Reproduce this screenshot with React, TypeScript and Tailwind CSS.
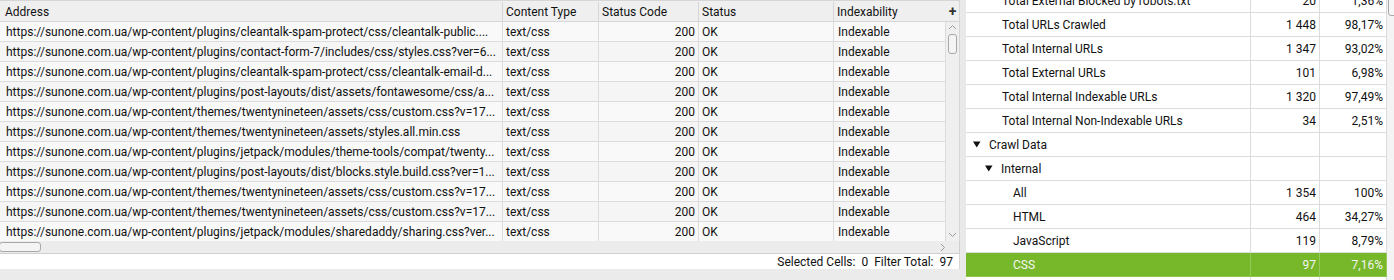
import React from "react";

const addresses = [
  "https://sunone.com.ua/wp-content/plugins/cleantalk-spam-protect/css/cleantalk-public....",
  "https://sunone.com.ua/wp-content/plugins/contact-form-7/includes/css/styles.css?ver=6...",
  "https://sunone.com.ua/wp-content/plugins/cleantalk-spam-protect/css/cleantalk-email-d...",
  "https://sunone.com.ua/wp-content/plugins/post-layouts/dist/assets/fontawesome/css/a...",
  "https://sunone.com.ua/wp-content/themes/twentynineteen/assets/css/custom.css?v=17...",
  "https://sunone.com.ua/wp-content/themes/twentynineteen/assets/styles.all.min.css",
  "https://sunone.com.ua/wp-content/plugins/jetpack/modules/theme-tools/compat/twenty...",
  "https://sunone.com.ua/wp-content/plugins/post-layouts/dist/blocks.style.build.css?ver=1...",
  "https://sunone.com.ua/wp-content/themes/twentynineteen/assets/css/custom.css?v=17...",
  "https://sunone.com.ua/wp-content/themes/twentynineteen/assets/css/custom.css?v=17...",
  "https://sunone.com.ua/wp-content/plugins/jetpack/modules/sharedaddy/sharing.css?ver...",
];

type RRow = {
  label: string;
  num?: string;
  pct?: string;
  indent: number;
  tri?: boolean;
  selected?: boolean;
};

const rightRows: RRow[] = [
  { label: "Total External Blocked by robots.txt", num: "20", pct: "1,36%", indent: 36 },
  { label: "Total URLs Crawled", num: "1 448", pct: "98,17%", indent: 36 },
  { label: "Total Internal URLs", num: "1 347", pct: "93,02%", indent: 36 },
  { label: "Total External URLs", num: "101", pct: "6,98%", indent: 36 },
  { label: "Total Internal Indexable URLs", num: "1 320", pct: "97,49%", indent: 36 },
  { label: "Total Internal Non-Indexable URLs", num: "34", pct: "2,51%", indent: 36 },
  { label: "Crawl Data", indent: 23, tri: true },
  { label: "Internal", indent: 35, tri: true },
  { label: "All", num: "1 354", pct: "100%", indent: 47 },
  { label: "HTML", num: "464", pct: "34,27%", indent: 47 },
  { label: "JavaScript", num: "119", pct: "8,79%", indent: 47 },
  { label: "CSS", num: "97", pct: "7,16%", indent: 47, selected: true },
  { label: "", indent: 47 },
];

function Tri() {
  return (
    <svg width="8" height="7" viewBox="0 0 8 7" className="shrink-0">
      <polygon points="0,0.5 7.5,0.5 3.75,6.5" fill="#111" />
    </svg>
  );
}

export default function App() {
  return (
    <div
      className="w-[1394px] h-[280px] flex bg-[#ebebeb] overflow-hidden text-[12px] text-[#111]"
      style={{ fontFamily: "Roboto, 'Liberation Sans', sans-serif" }}
    >
      {/* Left panel */}
      <div className="w-[960px] flex flex-col shrink-0">
        <div className="h-[241px] flex overflow-hidden">
          {/* table */}
          <div className="w-[946px] flex flex-col">
            <div className="h-[22px] flex bg-[#efefef] border-t border-b border-[#d6d6d6] shrink-0 pt-[1px]">
              <div className="w-[503px] border-r border-[#d6d6d6] pl-[5px] flex items-center">Address</div>
              <div className="w-[96px] border-r border-[#d6d6d6] pl-[3px] flex items-center">Content Type</div>
              <div className="w-[100px] border-r border-[#d6d6d6] pl-[3px] flex items-center">Status Code</div>
              <div className="w-[135px] border-r border-[#d6d6d6] pl-[3px] flex items-center">Status</div>
              <div className="w-[112px] pl-[3px] flex items-center">Indexability</div>
            </div>
            {addresses.map((a, i) => (
              <div
                key={i}
                className={`h-[20px] flex shrink-0 border-b border-[#dcdcdc] ${i % 2 === 0 ? "bg-[#f9f9f9]" : "bg-[#f5f5f5]"}`}
              >
                <div className="w-[503px] border-r border-[#dcdcdc] pl-[6px] flex items-center overflow-hidden whitespace-nowrap">{a}</div>
                <div className="w-[96px] border-r border-[#dcdcdc] pl-[3px] flex items-center">text/css</div>
                <div className="w-[100px] border-r border-[#dcdcdc] pr-[3px] flex items-center justify-end">200</div>
                <div className="w-[135px] border-r border-[#dcdcdc] pl-[3px] flex items-center">OK</div>
                <div className="w-[112px] border-r border-[#dcdcdc] pl-[4px] flex items-center">Indexable</div>
              </div>
            ))}
          </div>
          {/* vertical scrollbar */}
          <div className="w-[14px] flex flex-col bg-[#efefef] border-r border-[#d6d6d6]">
            <div className="h-[22px] border-t border-b border-[#d6d6d6] flex items-center justify-center text-[14px] font-bold text-[#333] leading-none">
              +
            </div>
            <div className="flex-1 flex flex-col items-center">
              <svg width="9" height="6" viewBox="0 0 9 6" className="mt-[2px]">
                <polyline points="1,5 4.5,1.5 8,5" fill="none" stroke="#9a9a9a" strokeWidth="1" />
              </svg>
              <div className="w-[9px] h-[20px] mt-[4px] rounded-[3px] border border-[#a8a8a8] bg-[#f4f4f4]" />
              <div className="flex-1" />
              <svg width="9" height="6" viewBox="0 0 9 6" className="mb-[3px]">
                <polyline points="1,1 4.5,4.5 8,1" fill="none" stroke="#9a9a9a" strokeWidth="1" />
              </svg>
            </div>
          </div>
        </div>
        {/* horizontal scrollbar */}
        <div className="h-[13px] flex items-center bg-[#ececec] border-b border-[#d0d0d0] border-r relative">
          <div className="w-[42px] h-[10px] rounded-[3px] border border-[#a8a8a8] bg-[#f4f4f4] -ml-[1px]" />
          <div className="flex-1" />
          <svg width="6" height="9" viewBox="0 0 6 9" className="mr-[13px]">
            <polyline points="1,1 4.5,4.5 1,8" fill="none" stroke="#9a9a9a" strokeWidth="1" />
          </svg>
        </div>
        {/* status bar */}
        <div className="h-[15px] bg-white flex items-center justify-end pr-[6px] gap-[6px] whitespace-nowrap border-r border-[#d6d6d6]">
          <span>Selected Cells:</span>
          <span>0</span>
          <span>Filter Total:</span>
          <span>97</span>
        </div>
        <div className="flex-1 bg-[#ebebeb]" />
      </div>

      {/* splitter */}
      <div className="w-[6px] shrink-0 bg-[#e9e9e9]" />

      {/* Right panel */}
      <div className="w-[428px] flex bg-white overflow-hidden">
        <div className="w-[421px] flex flex-col -mt-[11px]">
          {rightRows.map((r, i) => (
            <div
              key={i}
              className={`h-[24px] flex shrink-0 border-b ${r.selected ? "bg-[#76b82a] text-[#f4f4f4] border-[#8cc44c]" : "border-[#dcdcdc]"}`}
            >
              <div
                className={`w-[285px] border-r flex items-center gap-[8px] whitespace-nowrap ${r.selected ? "border-[#95c95a]" : "border-[#dcdcdc]"}`}
                style={{ paddingLeft: r.tri ? r.indent - 16 : r.indent }}
              >
                {r.tri && <Tri />}
                <span>{r.label}</span>
              </div>
              <div
                className={`w-[69px] border-r flex items-center justify-end pr-[3px] ${r.selected ? "border-[#95c95a]" : "border-[#dcdcdc]"}`}
              >
                {r.num}
              </div>
              <div
                className={`w-[67px] border-r flex items-center justify-end pr-[3px] ${r.selected ? "border-[#95c95a]" : "border-[#dcdcdc]"}`}
              >
                {r.pct}
              </div>
            </div>
          ))}
        </div>
        <div className="w-[7px] bg-[#f4f4f4] relative">
          <div className="absolute left-[1px] top-[-4px] w-[10px] h-[20px] rounded-[3px] border border-[#a8a8a8] bg-[#f6f6f6]" />
        </div>
      </div>
    </div>
  );
}
